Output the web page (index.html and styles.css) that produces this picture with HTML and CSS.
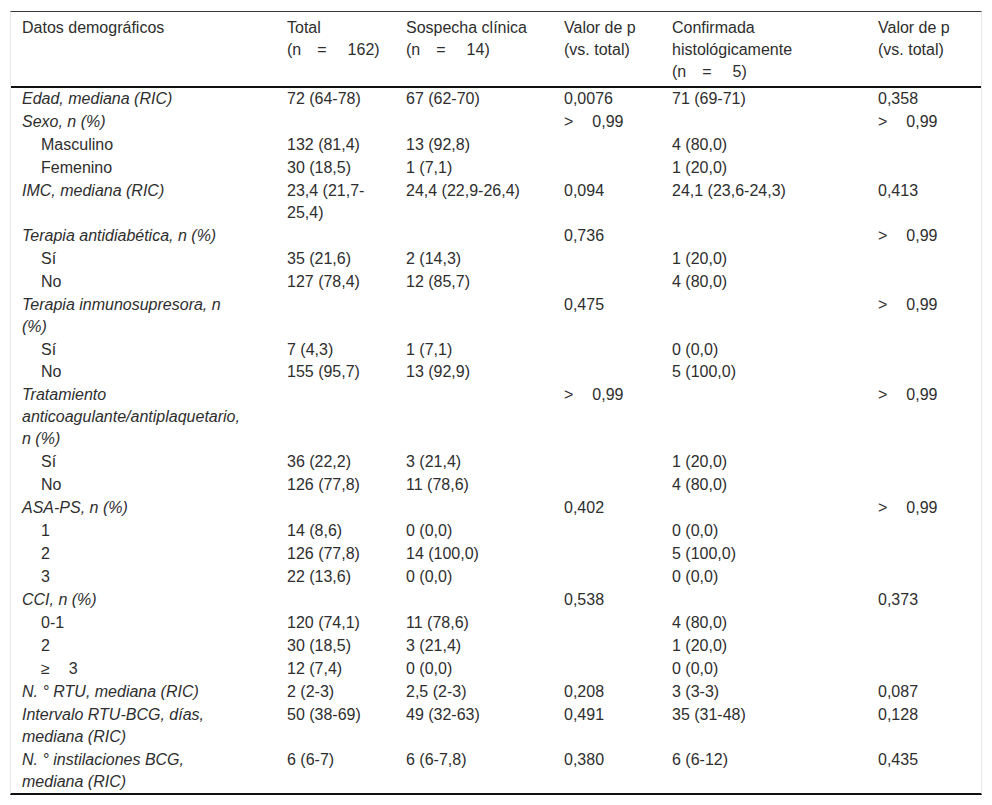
FILE: index.html
```html
<!DOCTYPE html>
<html lang="es">
<head>
<meta charset="utf-8">
<title>Datos demográficos</title>
<link rel="stylesheet" href="styles.css">
</head>
<body>
<div class="wrap">
<table class="data">
<colgroup>
<col class="c1"><col class="c2"><col class="c3"><col class="c4"><col class="c5"><col class="c6">
</colgroup>
<thead>
<tr>
<th>Datos demográficos</th>
<th>Total<br><span class="n">(n<span class="eq">=</span>162)</span></th>
<th>Sospecha clínica<br><span class="n">(n<span class="eq">=</span>14)</span></th>
<th>Valor de p (vs. total)</th>
<th>Confirmada histológicamente<br><span class="n">(n<span class="eq">=</span>5)</span></th>
<th>Valor de p (vs. total)</th>
</tr>
</thead>
<tbody>
<tr><td class="lab">Edad, mediana (RIC)</td><td>72 (64-78)</td><td>67 (62-70)</td><td>0,0076</td><td>71 (69-71)</td><td>0,358</td></tr>
<tr><td class="lab">Sexo, n (%)</td><td></td><td></td><td><span class="op">&gt;</span>0,99</td><td></td><td><span class="op">&gt;</span>0,99</td></tr>
<tr><td class="sub">Masculino</td><td>132 (81,4)</td><td>13 (92,8)</td><td></td><td>4 (80,0)</td><td></td></tr>
<tr><td class="sub">Femenino</td><td>30 (18,5)</td><td>1 (7,1)</td><td></td><td>1 (20,0)</td><td></td></tr>
<tr><td class="lab">IMC, mediana (RIC)</td><td>23,4 (21,7-25,4)</td><td>24,4 (22,9-26,4)</td><td>0,094</td><td>24,1 (23,6-24,3)</td><td>0,413</td></tr>
<tr><td class="lab">Terapia antidiabética, n (%)</td><td></td><td></td><td>0,736</td><td></td><td><span class="op">&gt;</span>0,99</td></tr>
<tr><td class="sub">Sí</td><td>35 (21,6)</td><td>2 (14,3)</td><td></td><td>1 (20,0)</td><td></td></tr>
<tr><td class="sub">No</td><td>127 (78,4)</td><td>12 (85,7)</td><td></td><td>4 (80,0)</td><td></td></tr>
<tr><td class="lab">Terapia inmunosupresora, n (%)</td><td></td><td></td><td>0,475</td><td></td><td><span class="op">&gt;</span>0,99</td></tr>
<tr><td class="sub">Sí</td><td>7 (4,3)</td><td>1 (7,1)</td><td></td><td>0 (0,0)</td><td></td></tr>
<tr><td class="sub">No</td><td>155 (95,7)</td><td>13 (92,9)</td><td></td><td>5 (100,0)</td><td></td></tr>
<tr><td class="lab">Tratamiento anticoagulante/antiplaquetario, n (%)</td><td></td><td></td><td><span class="op">&gt;</span>0,99</td><td></td><td><span class="op">&gt;</span>0,99</td></tr>
<tr><td class="sub">Sí</td><td>36 (22,2)</td><td>3 (21,4)</td><td></td><td>1 (20,0)</td><td></td></tr>
<tr><td class="sub">No</td><td>126 (77,8)</td><td>11 (78,6)</td><td></td><td>4 (80,0)</td><td></td></tr>
<tr><td class="lab">ASA-PS, n (%)</td><td></td><td></td><td>0,402</td><td></td><td><span class="op">&gt;</span>0,99</td></tr>
<tr><td class="sub">1</td><td>14 (8,6)</td><td>0 (0,0)</td><td></td><td>0 (0,0)</td><td></td></tr>
<tr><td class="sub">2</td><td>126 (77,8)</td><td>14 (100,0)</td><td></td><td>5 (100,0)</td><td></td></tr>
<tr><td class="sub">3</td><td>22 (13,6)</td><td>0 (0,0)</td><td></td><td>0 (0,0)</td><td></td></tr>
<tr><td class="lab">CCI, n (%)</td><td></td><td></td><td>0,538</td><td></td><td>0,373</td></tr>
<tr><td class="sub">0-1</td><td>120 (74,1)</td><td>11 (78,6)</td><td></td><td>4 (80,0)</td><td></td></tr>
<tr><td class="sub">2</td><td>30 (18,5)</td><td>3 (21,4)</td><td></td><td>1 (20,0)</td><td></td></tr>
<tr><td class="sub"><span class="op">≥</span>3</td><td>12 (7,4)</td><td>0 (0,0)</td><td></td><td>0 (0,0)</td><td></td></tr>
<tr><td class="lab">N. ° RTU, mediana (RIC)</td><td>2 (2-3)</td><td>2,5 (2-3)</td><td>0,208</td><td>3 (3-3)</td><td>0,087</td></tr>
<tr><td class="lab">Intervalo RTU-BCG, días, mediana (RIC)</td><td>50 (38-69)</td><td>49 (32-63)</td><td>0,491</td><td>35 (31-48)</td><td>0,128</td></tr>
<tr><td class="lab">N. ° instilaciones BCG, mediana (RIC)</td><td>6 (6-7)</td><td>6 (6-7,8)</td><td>0,380</td><td>6 (6-12)</td><td>0,435</td></tr>
</tbody>
</table>
</div>
</body>
</html>
```

FILE: styles.css
```css
html, body {
  margin: 0;
  padding: 0;
  background: #ffffff;
}

body {
  font-family: "Liberation Sans", Arial, sans-serif;
  font-size: 16px;
  color: #2e2e2e;
}

.wrap {
  margin: 11px 0 0 10px;
  width: 970px;
  border-top: 1px solid #3a3a3a;
  border-bottom: 2px solid #111111;
  border-left: 1px solid #e8e8e8;
  border-right: 1px solid #e8e8e8;
}

.data {
  width: 100%;
  border-collapse: collapse;
  table-layout: fixed;
}

.c1 { width: 264px; }
.c2 { width: 119px; }
.c3 { width: 158px; }
.c4 { width: 108px; }
.c5 { width: 206px; }
.c6 { width: 115px; }

.data th {
  font-weight: normal;
  text-align: left;
  vertical-align: top;
  line-height: 22px;
  padding: 5px 16px 3px 12px;
  border-bottom: 2px solid #111111;
}

.data td {
  vertical-align: top;
  line-height: 22px;
  padding: 0.1px 16px 0.85px 12px;
}

.data th:first-child,
.data td:first-child {
  padding-left: 11px;
  padding-right: 30px;
}

.data td.lab {
  font-style: italic;
}

.data td.sub {
  padding-left: 30px;
}

.n {
  white-space: nowrap;
}

.eq {
  margin: 0 21px 0 16px;
}

.op {
  margin-right: 19px;
}
```
